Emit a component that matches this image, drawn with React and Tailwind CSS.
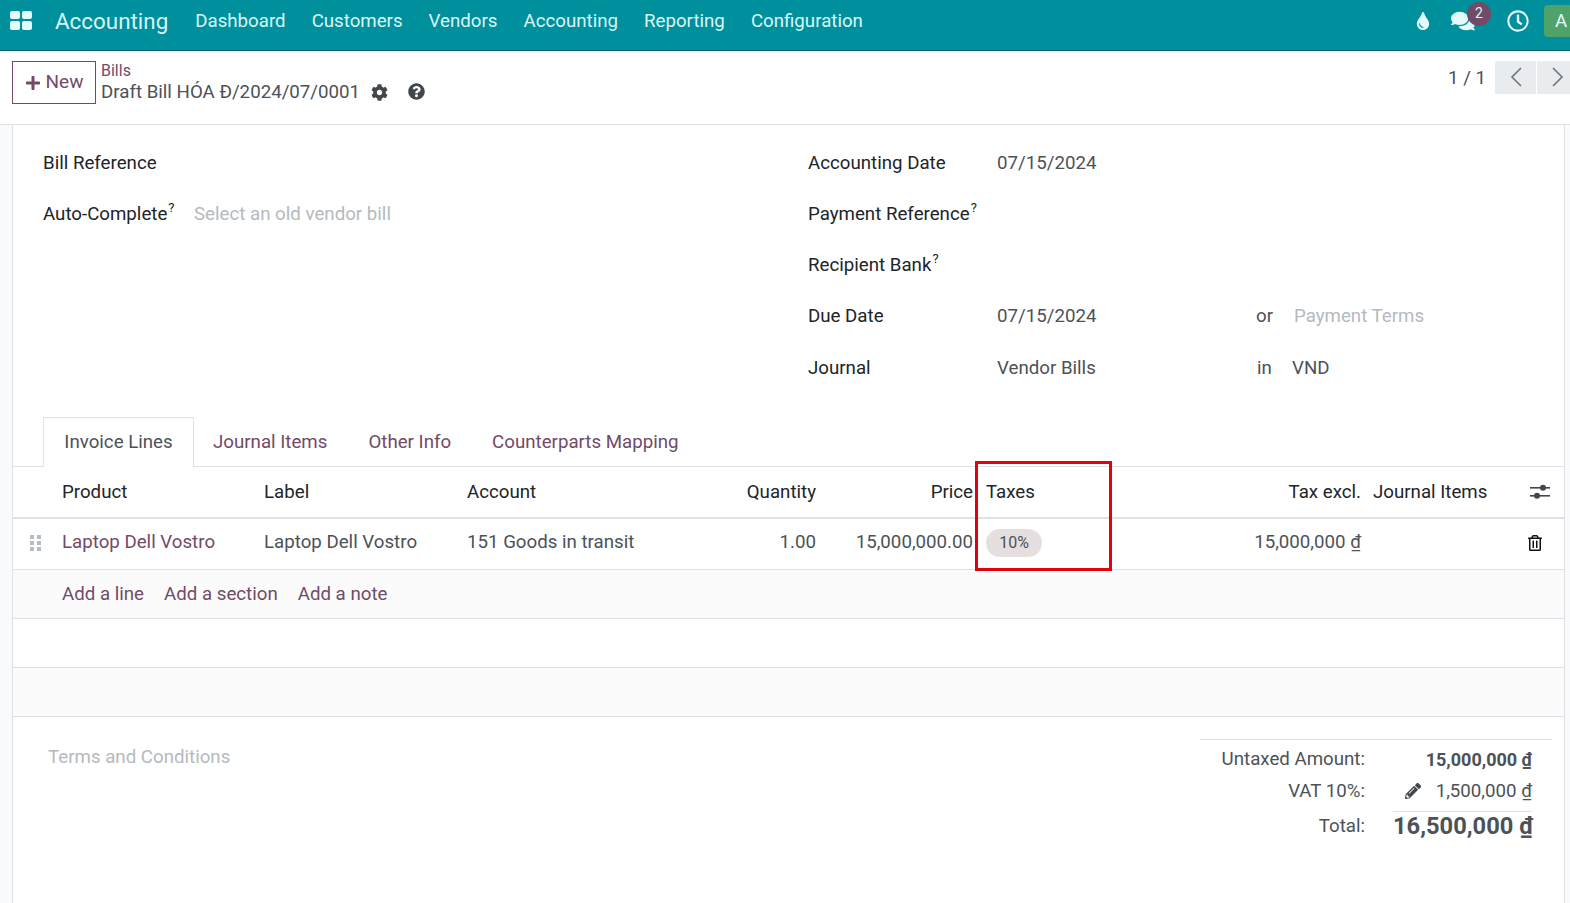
import React from "react";
import { FaTint, FaComments, FaRegClock, FaCog, FaQuestionCircle, FaPlus, FaPencilAlt, FaRegTrashAlt } from "react-icons/fa";

const menu = ["Dashboard", "Customers", "Vendors", "Accounting", "Reporting", "Configuration"];
const tabs = ["Journal Items", "Other Info", "Counterparts Mapping"];

const Help = () => <sup className="text-[13px] ml-px relative -top-[8px]">?</sup>;

const Row = ({ label, help, children, last }) => (
  <div className={`flex items-center h-[51px] ${last ? "pt-[2px]" : ""}`}>
    <div className="w-[189px] text-[#212529] shrink-0">
      {label}
      {help && <Help />}
    </div>
    {children}
  </div>
);

const Dong = ({ bold }) => <span className={`underline ${bold ? "font-bold" : ""}`}>₫</span>;

const App = () => {
  return (
    <div className="h-[903px] w-[1570px] overflow-hidden bg-white text-[18.7px] text-[#4c5257] font-['Roboto',sans-serif]">
      {/* Navbar */}
      <nav className="h-[51px] bg-[#008f9c] border-b border-[#05606a] flex items-center text-[#d9f7f7] relative">
        <div className="ml-[10px] w-[22px] h-[19px] grid grid-cols-2 gap-[2px] mb-[10px]">
          <span className="bg-[#e4fbfb] rounded-[2px]" />
          <span className="bg-[#e4fbfb] rounded-[2px]" />
          <span className="bg-[#e4fbfb] rounded-[2px]" />
          <span className="bg-[#e4fbfb] rounded-[2px]" />
        </div>
        <span className="ml-[23px] text-[22.4px] mb-[7px]">Accounting</span>
        <div className="flex gap-[26px] ml-[27px] mb-[8px]">
          {menu.map((m) => (
            <span key={m}>{m}</span>
          ))}
        </div>
        <div className="ml-auto flex items-center mb-[8px]">
          <FaTint className="text-[#e4fbfb] text-[18px] mr-[19px]" />
          <div className="relative mr-[32px]">
            <FaComments className="text-[#e4fbfb] text-[24px]" />
            <span className="absolute -top-[7px] left-[16px] w-[24px] h-[24px] rounded-full bg-[#714b67] text-[14px] leading-[22px] text-center">2</span>
          </div>
          <FaRegClock className="text-[#e4fbfb] text-[22px] mr-[15px]" />
        </div>
        <div className="w-[26px] h-[32px] bg-[#4fa36a] rounded-l-[4px] pl-[11px] leading-[32px] text-[#e4fbfb] mb-[8px] overflow-hidden">A</div>
      </nav>

      {/* Control panel */}
      <div className="h-[74px] border-b border-[#dee2e6] flex items-start pl-[12px] relative">
        <button className="mt-[10px] w-[84px] h-[43px] border border-[#714b67] text-[#714b67] flex items-center justify-center gap-[5px] text-[19px]">
          <FaPlus className="text-[16px]" />
          New
        </button>
        <div className="ml-[5px] mt-[10px]">
          <div className="text-[#714b67] text-[16px] leading-[20px]">Bills</div>
          <div className="flex items-center leading-[22px]">
            Draft Bill HÓA Đ/2024/07/0001
            <FaCog className="ml-[11px] text-[17px] text-[#41474d]" />
            <FaQuestionCircle className="ml-[20px] text-[17px] text-[#41474d] -translate-y-px" />
          </div>
        </div>
        <div className="ml-auto flex items-start mt-[10px]">
          <span className="mr-[9px] mt-[3px]">1 / 1</span>
          <div className="w-[41px] h-[33px] bg-[#e9ecef] flex items-center justify-center mr-px">
            <svg viewBox="0 0 14 22" className="w-[14px] h-[22px] text-[#6c757d] -translate-y-px" fill="none" stroke="currentColor" strokeWidth="1.6">
              <path d="M12 2 3 11l9 9" />
            </svg>
          </div>
          <div className="w-[33px] h-[33px] bg-[#e9ecef] flex items-center justify-center pl-[8px]">
            <svg viewBox="0 0 14 22" className="w-[14px] h-[22px] text-[#6c757d] -translate-y-px" fill="none" stroke="currentColor" strokeWidth="1.6">
              <path d="m2 2 9 9-9 9" />
            </svg>
          </div>
        </div>
      </div>

      {/* Sheet */}
      <div className="flex h-[778px]">
        <div className="w-[12px] bg-[#f9fafb] border-r border-[#dee2e6] box-content shrink-0" />
        <div className="flex-1 min-w-0">
          <div className="grid grid-cols-[765px_1fr] pt-[13px] pl-[30px] h-[292px]">
            <div>
              <div className="flex items-center h-[51px] text-[#212529]">Bill Reference</div>
              <div className="flex items-center h-[51px]">
                <div className="w-[151px] text-[#212529] shrink-0">
                  Auto-Complete
                  <Help />
                </div>
                <span className="text-[#b4bac0]">Select an old vendor bill</span>
              </div>
            </div>
            <div>
              <Row label="Accounting Date">07/15/2024</Row>
              <Row label="Payment Reference" help />
              <Row label="Recipient Bank" help />
              <Row label="Due Date">
                <span className="w-[259px]">07/15/2024</span>
                <span className="w-[38px]">or</span>
                <span className="text-[#b4bac0]">Payment Terms</span>
              </Row>
              <Row label="Journal" last>
                <span className="w-[260px]">Vendor Bills</span>
                <span className="w-[35px]">in</span>
                <span>VND</span>
              </Row>
            </div>
          </div>

          {/* Tabs */}
          <div className="h-[50px] flex items-end pl-[30px] border-b border-[#dee2e6]">
            <div className="h-[50px] w-[151px] border border-b-0 border-[#dee2e6] bg-white flex items-center justify-center -mb-px">Invoice Lines</div>
            <div className="flex h-[49px] pt-[2px] items-center text-[#714b67] gap-[41px] ml-[19px]">
              {tabs.map((t) => (
                <span key={t}>{t}</span>
              ))}
            </div>
          </div>

          {/* Lines table */}
          <div className="relative">
            <div className="grid grid-cols-[49px_202px_203px_254px_95px_157px_228px_160px_161px_1fr] items-center h-[52px] border-b-2 border-[#dee2e6] text-[#212529]">
              <span />
              <span>Product</span>
              <span>Label</span>
              <span>Account</span>
              <span className="text-right">Quantity</span>
              <span className="text-right">Price</span>
              <span className="pl-[13px]">Taxes</span>
              <span className="text-right">Tax excl.</span>
              <span className="pl-[12px] whitespace-nowrap">Journal Items</span>
              <svg viewBox="0 0 20 18" className="w-[20px] h-[18px] ml-[8px] text-[#41474d]" fill="currentColor">
                <rect x="0" y="4" width="20" height="1.6" />
                <rect x="0" y="12" width="20" height="1.6" />
                <circle cx="13" cy="4.8" r="3" />
                <circle cx="7" cy="12.8" r="3" />
              </svg>
            </div>
            <div className="grid grid-cols-[49px_202px_203px_254px_95px_157px_228px_160px_161px_1fr] items-center h-[51px] pb-[3px] border-b border-[#dee2e6]">
              <div className="grid grid-cols-2 gap-x-[3px] gap-y-[2px] w-[11px] ml-[17px]">
                {[0, 1, 2, 3, 4, 5].map((i) => (
                  <span key={i} className="w-[4px] h-[4px] bg-[#b4bcc4]" />
                ))}
              </div>
              <span className="text-[#714b67]">Laptop Dell Vostro</span>
              <span>Laptop Dell Vostro</span>
              <span>151 Goods in transit</span>
              <span className="text-right">1.00</span>
              <span className="text-right">15,000,000.00</span>
              <div className="pl-[13px]">
                <span className="inline-block w-[56px] h-[28px] rounded-full bg-[#e6dfdf] text-[16px] leading-[28px] text-center">10%</span>
              </div>
              <span className="text-right">
                15,000,000 <Dong />
              </span>
              <span />
              <FaRegTrashAlt className="text-[16px] text-[#111] ml-[5px]" />
            </div>
            <div className="h-[49px] bg-[#fbfbfb] border-b border-[#dee2e6] flex items-center pl-[49px] gap-[20px] text-[#714b67]">
              <span>Add a line</span>
              <span>Add a section</span>
              <span>Add a note</span>
            </div>
            <div className="h-[49px] border-b border-[#dee2e6]" />
            <div className="h-[49px] bg-[#fbfbfb] border-b border-[#dee2e6]" />
            {/* red highlight */}
            <div className="absolute left-[962px] -top-[6px] w-[137px] h-[110px] border-[3px] border-[#e3000f]" />
          </div>

          {/* Footer */}
          <div className="flex justify-between pl-[35px] pt-[22px]">
            <span className="text-[#b4bac0] mt-[4px]">Terms and Conditions</span>
            <div className="w-[352px] mr-[12px] border-t border-[#dee2e6] pt-[3px]">
              <div className="flex h-[32px] items-center">
                <span className="w-[165px] text-right">Untaxed Amount:</span>
                <span className="w-[167px] text-right font-bold text-[18px]">
                  15,000,000 <Dong bold />
                </span>
              </div>
              <div className="flex h-[32px] items-center">
                <span className="w-[165px] text-right">VAT 10%:</span>
                <span className="w-[167px] text-right flex items-center justify-end">
                  <FaPencilAlt className="text-[16px] mr-[15px] text-[#41474d]" />
                  1,500,000&nbsp;<Dong />
                </span>
              </div>
              <div className="flex h-[30px] items-center mt-[4px]">
                <span className="w-[165px] text-right">Total:</span>
                <span className="w-[139px] ml-[28px] border-t border-[#dee2e6] text-right font-bold text-[23.7px] leading-[29px] whitespace-nowrap">
                  16,500,000 <Dong bold />
                </span>
              </div>
            </div>
          </div>
        </div>
        <div className="w-[6px] bg-[#f9fafb] border-l border-[#dee2e6] shrink-0" />
      </div>
    </div>
  );
};

export default App;
